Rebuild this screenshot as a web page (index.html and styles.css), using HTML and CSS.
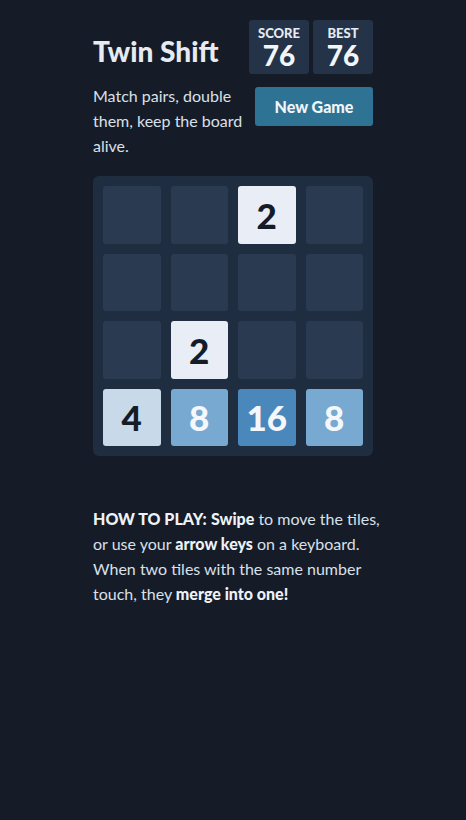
FILE: index.html
```html
<!DOCTYPE html>
<html lang="en">
<head>
<meta charset="utf-8">
<title>Twin Shift</title>
<link rel="stylesheet" href="styles.css">
</head>
<body>
<main class="container">
  <header class="heading">
    <h1 class="title">Twin Shift</h1>
    <div class="scores">
      <div class="score-box"><span class="score-label">SCORE</span><span class="score-value">76</span></div>
      <div class="score-box"><span class="score-label">BEST</span><span class="score-value">76</span></div>
    </div>
  </header>
  <div class="above-game">
    <p class="intro">Match pairs, double them, keep the board alive.</p>
    <button class="new-game">New Game</button>
  </div>
  <div class="board">
    <div class="cell"></div><div class="cell"></div><div class="cell tile t2">2</div><div class="cell"></div>
    <div class="cell"></div><div class="cell"></div><div class="cell"></div><div class="cell"></div>
    <div class="cell"></div><div class="cell tile t2">2</div><div class="cell"></div><div class="cell"></div>
    <div class="cell tile t4">4</div><div class="cell tile t8">8</div><div class="cell tile t16">16</div><div class="cell tile t8">8</div>
  </div>
  <p class="explanation"><strong>HOW TO PLAY:</strong> <strong>Swipe</strong> to move the tiles, or use your <strong>arrow keys</strong> on a keyboard. When two tiles with the same number touch, they <strong>merge into one!</strong></p>
</main>
</body>
</html>
```
FILE: styles.css
```css
html, body {
  margin: 0;
  padding: 0;
  background: #151b27;
}
body {
  font-family: Lato, "Open Sans", sans-serif;
  color: #e6ebf2;
}
.container {
  width: 280px;
  margin: 0 auto;
  padding-top: 20px;
}
.heading {
  display: flex;
  justify-content: space-between;
  align-items: center;
}
.title {
  margin: 7px 0 0;
  font-size: 28px;
  font-weight: 900;
  color: #e6ebf2;
  letter-spacing: 0;
}
.scores {
  display: flex;
  gap: 4px;
}
.score-box {
  width: 60px;
  height: 54px;
  background: #243347;
  border-radius: 3px;
  display: flex;
  flex-direction: column;
  align-items: center;
  justify-content: center;
}
.score-label {
  font-size: 13px;
  font-weight: 900;
  line-height: 15px;
  color: #e6ebf2;
}
.score-value {
  font-size: 28px;
  font-weight: 900;
  line-height: 28px;
  color: #f2f5f9;
}
.above-game {
  display: flex;
  justify-content: space-between;
  align-items: flex-start;
  margin-top: 11px;
}
.intro {
  margin: -2px 0 0;
  width: 155px;
  font-size: 16px;
  line-height: 25px;
  color: #d9e0ea;
}
.new-game {
  margin-top: 2px;
  width: 118px;
  height: 39px;
  border: none;
  border-radius: 3px;
  background: #2e7393;
  color: #f2f5f9;
  font-family: Lato, "Open Sans", sans-serif;
  font-size: 16px;
  font-weight: 900;
  padding: 0;
}
.board {
  margin-top: 18px;
  width: 280px;
  height: 280px;
  box-sizing: border-box;
  padding: 10px;
  background: #1f2d40;
  border-radius: 6px;
  display: grid;
  grid-template-columns: repeat(4, 1fr);
  grid-template-rows: repeat(4, 1fr);
  gap: 10px 10px;
}
.cell {
  background: #2a3b51;
  border-radius: 3px;
  display: flex;
  align-items: center;
  justify-content: center;
  font-size: 35px;
  font-weight: 900;
}
.t2 { background: #e9eef6; color: #141c28; }
.t4 { background: #c8d9ea; color: #141c28; }
.t8 { background: #78a9d0; color: #f4f7fb; }
.t16 { background: #4a87bb; color: #f4f7fb; }
.explanation {
  margin: 50px -20px 0 0;
  font-size: 16px;
  line-height: 25px;
  color: #d9e0ea;
}
.explanation strong {
  font-weight: 900;
  color: #eef2f7;
}
```
